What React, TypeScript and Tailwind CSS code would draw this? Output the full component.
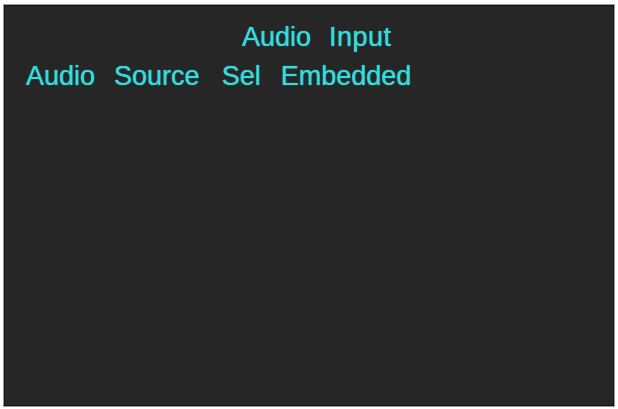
export default function App() {
  return (
    <div className="w-[618px] h-[409px] bg-white pt-[4px] pl-[3px] pr-[3px] pb-[2px]">
      <div className="w-full h-full border border-[#9a9a9a]">
        <div className="w-full h-full border border-[#141414] bg-[#262626] pt-[12px] font-['Liberation_Sans',Arial,sans-serif] text-[27px] leading-[39px] text-[#34dcdc] [text-shadow:0_0_1px_#34dcdc]">
          <div className="flex pl-[237px] whitespace-nowrap">
            <span>Audio</span>
            <span className="ml-[18px] tracking-[0.5px]">Input</span>
          </div>
          <div className="flex pl-[21px] whitespace-nowrap">
            <span>Audio</span>
            <span className="ml-[19px]">Source</span>
            <span className="ml-[22px]">Sel</span>
            <span className="ml-[20px]">Embedded</span>
          </div>
        </div>
      </div>
    </div>
  )
}
